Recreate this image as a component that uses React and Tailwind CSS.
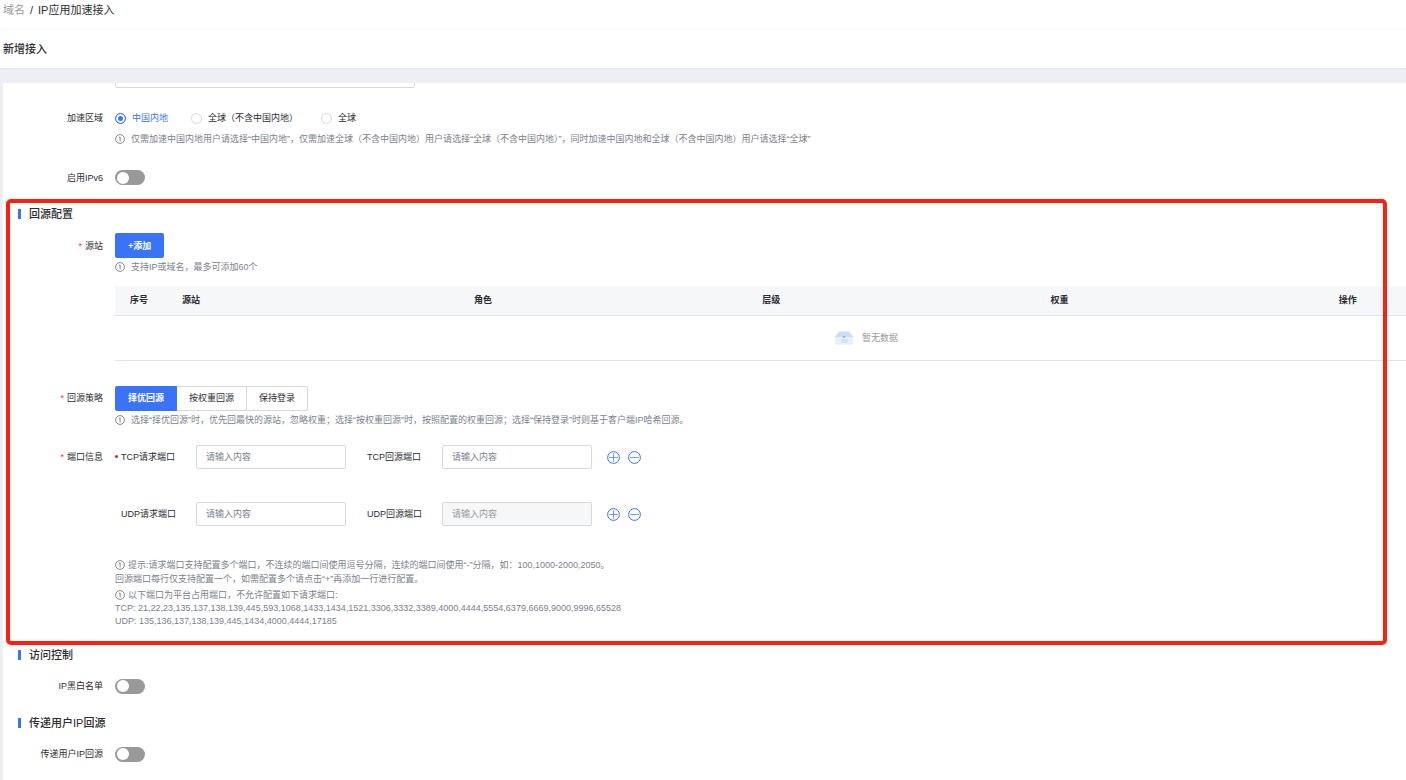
import React, { useState } from 'react';

const TCP_PORTS =
  '21,22,23,135,137,138,139,445,593,1068,1433,1434,1521,3306,3332,3389,4000,4444,5554,6379,6669,9000,9996,65528';
const UDP_PORTS = '135,136,137,138,139,445,1434,4000,4444,17185';

const regions = ['中国内地', '全球（不含中国内地）', '全球'];
const strategies = ['择优回源', '按权重回源', '保持登录'];

function InfoIcon() {
  return (
    <svg className="size-[10px] shrink-0 text-[#666870]" viewBox="0 0 10 10" fill="none" stroke="currentColor" strokeWidth="0.8">
      <circle cx="5" cy="5" r="4.4" />
      <path d="M4 3.6L5.1 2.8V7.4" />
    </svg>
  );
}

function EmptyIcon() {
  return (
    <svg className="h-[14px] w-[18px]" viewBox="0 0 18 14">
      <path d="M4 0.5H14L17 5V9H1V5Z" fill="#c9defc" />
      <path d="M0 5H6.5Q7.5 7 9 7T11.5 5H18V13Q18 13.5 17.5 13.5H0.5Q0 13.5 0 13Z" fill="#e6f0fe" />
      <path d="M0 5.3H6.2M11.8 5.3H18" stroke="#b9cdec" strokeWidth="0.8" />
      <path d="M7 5.2H11L9 7.2Z" fill="#8fa9d4" />
      <path d="M6 9H13M6 11H13" stroke="#b9cdec" strokeWidth="0.8" />
    </svg>
  );
}

function CircleButton({ label, plus }) {
  return (
    <button type="button" aria-label={label} className="text-[#3b73f6]">
      <svg className="size-[13px]" viewBox="0 0 13 13" fill="none" stroke="currentColor">
        <circle cx="6.5" cy="6.5" r="5.9" />
        <path d={plus ? 'M2.2 6.5H10.8M6.5 2.2V10.8' : 'M2.2 6.5H10.8'} strokeWidth="0.7" />
      </svg>
    </button>
  );
}

function Tip({ children, tight }) {
  return (
    <p className={`flex h-[14px] items-center whitespace-nowrap text-[#7b7f8c] ${tight ? 'gap-[3px]' : 'gap-[6px]'}`}>
      <InfoIcon />
      <span>{children}</span>
    </p>
  );
}

function SectionTitle({ children }) {
  return (
    <h2 className="flex h-4 items-center gap-2 pl-[15px] text-[11px] font-medium">
      <span className="h-[10px] w-[3px] bg-[#3b73f6]" />
      {children}
    </h2>
  );
}

function Row({ label, labelClass, required, htmlFor, className, children }) {
  const Label = htmlFor ? 'label' : 'div';
  return (
    <div className={`flex gap-3 ${className}`}>
      <Label
        htmlFor={htmlFor}
        className={`flex w-[100px] shrink-0 items-center justify-end gap-[3px] whitespace-nowrap ${labelClass}`}
      >
        {required && <span className="text-[#f5352b]">*</span>}
        {label}
      </Label>
      <div className="min-w-0 flex-1">{children}</div>
    </div>
  );
}

function Switch({ id }) {
  const [on, setOn] = useState(false);
  return (
    <button
      id={id}
      type="button"
      role="switch"
      aria-checked={on}
      onClick={() => setOn(!on)}
      className={`flex h-[15px] w-[30px] items-center rounded-full px-[2px] ${on ? 'justify-end bg-[#3b73f6]' : 'bg-[#999999]'}`}
    >
      <span className="size-3 rounded-full bg-white" />
    </button>
  );
}

function PortField({ id, label, disabled }) {
  return (
    <div className="flex items-center">
      <label htmlFor={id} className="w-[75px] whitespace-nowrap">
        {label}
      </label>
      <input
        id={id}
        type="text"
        placeholder="请输入内容"
        disabled={disabled}
        className="h-6 w-[150px] rounded-[2px] border border-[#d7d8db] bg-white px-[9px] placeholder:text-[#7b7f8c] disabled:bg-[#f6f7f9] disabled:placeholder:text-[#999999]"
      />
    </div>
  );
}

function PortRow({ protocol, required, disabled }) {
  return (
    <div className="flex h-6 items-center">
      <span className="flex w-[6px] items-center">
        {required && <span className="size-[3px] rounded-full bg-[#f01818]" />}
      </span>
      <PortField id={`${protocol}-request`} label={`${protocol}请求端口`} />
      <div className="w-[21px]" />
      <PortField id={`${protocol}-origin`} label={`${protocol}回源端口`} disabled={disabled} />
      <div className="flex items-center gap-2 pl-[15px] pt-[2px]">
        <CircleButton label="添加一行" plus />
        <CircleButton label="删除一行" />
      </div>
    </div>
  );
}

export default function App() {
  const [region, setRegion] = useState(regions[0]);
  const [strategy, setStrategy] = useState(strategies[0]);

  return (
    <div className="flex min-h-screen flex-col overflow-hidden bg-[#eeeff4] font-['Liberation_Sans','Noto_Sans_CJK_SC',sans-serif] text-[9px] leading-[14px] text-[#2b2c30]">
      <nav className="flex gap-[5px] bg-white pb-[10px] pl-[3px] text-[11px] leading-5">
        <a href="#domains" className="text-[#999999]">域名</a>
        <span>/</span>
        <span>IP应用加速接入</span>
      </nav>
      <header className="bg-white pl-[3px] shadow-[0_0_3px_rgba(0,0,0,0.08)]">
        <h1 className="text-[11px] font-medium leading-[38px]">新增接入</h1>
      </header>

      <main className="ml-[3px] mt-[15px] flex-1 bg-white pb-4">
        <div className="flex h-[5px] items-end overflow-hidden pl-28">
          <input type="text" aria-label="域名" className="h-6 w-[300px] shrink-0 rounded-[2px] border border-[#d7d8db]" />
        </div>

        <Row label="加速区域" labelClass="h-3" className="mt-6">
          <div className="flex h-3 items-center gap-[23px]">
            {regions.map((item) => (
              <label
                key={item}
                className={`flex items-center gap-[6px] whitespace-nowrap ${item === region ? 'text-[#3b73f6]' : ''}`}
              >
                <input
                  type="radio"
                  name="region"
                  checked={item === region}
                  onChange={() => setRegion(item)}
                  className="size-[11px] appearance-none rounded-full border border-[#d7d8db] bg-white checked:border-[#3b73f6] checked:bg-[#3b73f6] checked:shadow-[inset_0_0_0_2px_white]"
                />
                {item}
              </label>
            ))}
          </div>
          <div className="mt-2">
            <Tip>
              仅需加速中国内地用户请选择“中国内地”，仅需加速全球（不含中国内地）用户请选择“全球（不含中国内地）”，同时加速中国内地和全球（不含中国内地）用户请选择“全球”
            </Tip>
          </div>
        </Row>

        <Row label="启用IPv6" labelClass="h-[15px]" htmlFor="ipv6" className="mt-6">
          <Switch id="ipv6" />
        </Row>

        <section className="relative mt-[14px] pb-[17px] pt-[7px]">
          <SectionTitle>回源配置</SectionTitle>

          <Row label="源站" required labelClass="h-[25px]" className="mt-[11px]">
            <button type="button" className="block h-[25px] rounded-[2px] bg-[#3b73f6] px-[13px] font-bold text-white">
              +添加
            </button>
            <div className="mt-[2px]">
              <Tip>支持IP或域名，最多可添加60个</Tip>
            </div>
            <div className="mt-3 overflow-hidden">
              <table className="w-full min-w-[1503px] table-fixed border-collapse text-left">
                <thead>
                  <tr className="h-[29px] border-b border-[#e0e3ec] bg-[#f6f7f9]">
                    <th className="w-[58px] pl-[15px]">序号</th>
                    <th className="w-[292px] pl-[9px]">源站</th>
                    <th className="pl-[9px]">角色</th>
                    <th className="pl-[9px]">层级</th>
                    <th className="pl-[9px]">权重</th>
                    <th className="pl-[9px]">操作</th>
                  </tr>
                </thead>
                <tbody>
                  <tr className="h-[45px] border-b border-[#e0e3ec]">
                    <td colSpan={6}>
                      <div className="flex items-center justify-center gap-[9px] text-[#999999]">
                        <EmptyIcon />
                        暂无数据
                      </div>
                    </td>
                  </tr>
                </tbody>
              </table>
            </div>
          </Row>

          <Row label="回源策略" required labelClass="h-[25px]" className="mt-[25px]">
            <div className="flex">
              {strategies.map((item) => (
                <button
                  key={item}
                  type="button"
                  onClick={() => setStrategy(item)}
                  className={`-ml-px h-[25px] border px-3 first:ml-0 first:rounded-l-[2px] last:rounded-r-[2px] ${
                    item === strategy
                      ? 'z-10 border-[#3b73f6] bg-[#3b73f6] font-bold text-white'
                      : 'border-[#d7d8db] bg-white'
                  }`}
                >
                  {item}
                </button>
              ))}
            </div>
            <div className="mt-[2px]">
              <Tip>
                选择“择优回源”时，优先回最快的源站，忽略权重；选择“按权重回源”时，按照配置的权重回源；选择“保持登录”时则基于客户端IP哈希回源。
              </Tip>
            </div>
          </Row>

          <Row label="端口信息" required labelClass="h-6" className="mt-[18px]">
            <div className="flex flex-col gap-[33px]">
              <PortRow protocol="TCP" required />
              <PortRow protocol="UDP" disabled />
            </div>
            <div className="mt-8 text-[#7b7f8c]">
              <Tip tight>
                提示:请求端口支持配置多个端口，不连续的端口间使用逗号分隔，连续的端口间使用“-”分隔，如：100,1000-2000,2050。
              </Tip>
              <p>回源端口每行仅支持配置一个，如需配置多个请点击“+”再添加一行进行配置。</p>
              <div className="mt-[2px]">
                <Tip tight>以下端口为平台占用端口，不允许配置如下请求端口:</Tip>
              </div>
              <p className="leading-[13px]">TCP: {TCP_PORTS}</p>
              <p className="leading-[13px]">UDP: {UDP_PORTS}</p>
            </div>
          </Row>

          {/* highlight frame over the origin settings */}
          <div className="pointer-events-none absolute inset-y-0 left-[3px] right-[19px] rounded-[5px] border-4 border-[#ff1e12]" />
        </section>

        <section className="mt-[2px]">
          <SectionTitle>访问控制</SectionTitle>
          <Row label="IP黑白名单" labelClass="h-[15px]" htmlFor="ip-list" className="mt-4">
            <Switch id="ip-list" />
          </Row>
        </section>

        <section className="mt-[21px]">
          <SectionTitle>传递用户IP回源</SectionTitle>
          <Row label="传递用户IP回源" labelClass="h-[15px]" htmlFor="pass-ip" className="mt-4">
            <Switch id="pass-ip" />
          </Row>
        </section>
      </main>
    </div>
  );
}
